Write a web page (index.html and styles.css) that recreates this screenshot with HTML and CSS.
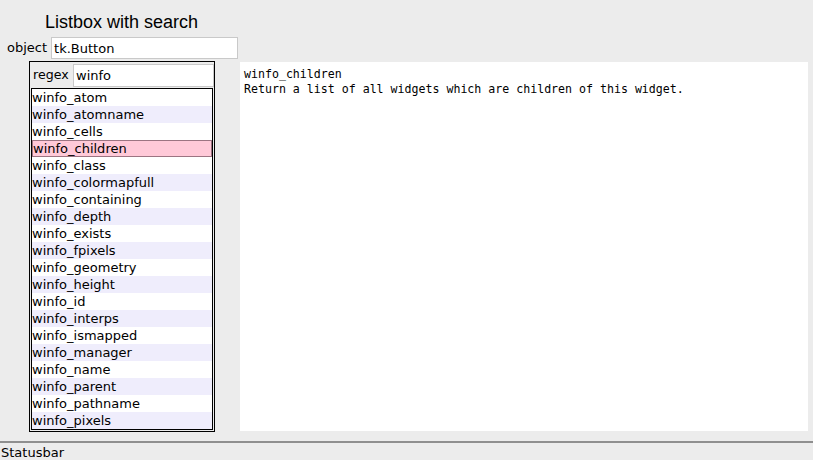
FILE: index.html
```html
<!DOCTYPE html>
<html>
<head>
<meta charset="utf-8">
<title>Listbox with search</title>
<link rel="stylesheet" href="styles.css">
</head>
<body>
<div class="app">
  <h1 class="title">Listbox with search</h1>
  <div class="object-row">
    <span class="label">object</span>
    <div class="entry object-entry">tk.Button</div>
  </div>
  <div class="main">
    <div class="search-frame">
      <div class="regex-row">
        <span class="label">regex</span>
        <div class="entry regex-entry">winfo</div>
      </div>
      <ul class="listbox">
        <li>winfo_atom</li>
        <li class="alt">winfo_atomname</li>
        <li>winfo_cells</li>
        <li class="selected">winfo_children</li>
        <li>winfo_class</li>
        <li class="alt">winfo_colormapfull</li>
        <li>winfo_containing</li>
        <li class="alt">winfo_depth</li>
        <li>winfo_exists</li>
        <li class="alt">winfo_fpixels</li>
        <li>winfo_geometry</li>
        <li class="alt">winfo_height</li>
        <li>winfo_id</li>
        <li class="alt">winfo_interps</li>
        <li>winfo_ismapped</li>
        <li class="alt">winfo_manager</li>
        <li>winfo_name</li>
        <li class="alt">winfo_parent</li>
        <li>winfo_pathname</li>
        <li class="alt">winfo_pixels</li>
      </ul>
    </div>
    <div class="doc">
      <div class="doc-line">winfo_children</div>
      <div class="doc-line">Return a list of all widgets which are children of this widget.</div>
    </div>
  </div>
  <div class="statusbar">Statusbar</div>
</div>
</body>
</html>
```

FILE: styles.css
```css
* { box-sizing: border-box; }
html, body { margin: 0; padding: 0; }
body {
  background: #ececec;
  font-family: "DejaVu Sans", "Liberation Sans", sans-serif;
  color: #000;
  width: 813px;
  height: 460px;
  overflow: hidden;
}
.app { width: 813px; height: 460px; }
.title {
  margin: 0;
  height: 37px;
  padding: 9px 0 0 45px;
  font-family: "Liberation Sans", Arial, sans-serif;
  font-size: 18px;
  line-height: 26px;
  font-weight: normal;
}
.label { font-size: 13px; line-height: 16px; }
.object-row {
  display: flex;
  align-items: center;
  height: 22px;
  padding-left: 7px;
}
.entry {
  background: #fff;
  border: 1px solid #c9c9c9;
  font-size: 13px;
  padding-left: 2px;
  display: flex;
  align-items: center;
}
.object-entry { width: 187px; height: 22px; margin-left: 4px; }
.main {
  display: flex;
  align-items: flex-start;
  margin-top: 2px;
  padding-left: 29px;
}
.search-frame {
  width: 186px;
  height: 371px;
  border: 1px solid #000;
}
.regex-row {
  display: flex;
  align-items: center;
  height: 26px;
  padding-left: 3px;
}
.regex-row .label { font-size: 12.6px; }
.regex-entry { width: 141px; height: 23px; margin-left: auto; }
.listbox {
  list-style: none;
  margin: 0 1px;
  padding: 0;
  width: 182px;
  height: 342px;
  border: 1px solid #000;
  background: #fff;
}
.listbox li {
  height: 17px;
  line-height: 17px;
  font-size: 13px;
  padding-left: 0;
  white-space: nowrap;
}
.listbox li.alt { background: #efedfc; }
.listbox li.selected {
  background: #ffc9d8;
  border: 1px solid #9c7482;
  line-height: 15px;
}
.doc {
  margin-left: 25px;
  margin-top: 1px;
  width: 568px;
  height: 369px;
  background: #fff;
  padding: 5px 4px;
  font-family: "DejaVu Sans Mono", monospace;
  font-size: 11.6px;
  line-height: 15px;
}
.statusbar {
  margin-top: 9px;
  border-top: 2px solid #8f8f8f;
  height: 19px;
  padding-left: 1px;
  font-size: 13px;
  line-height: 19px;
}
```
